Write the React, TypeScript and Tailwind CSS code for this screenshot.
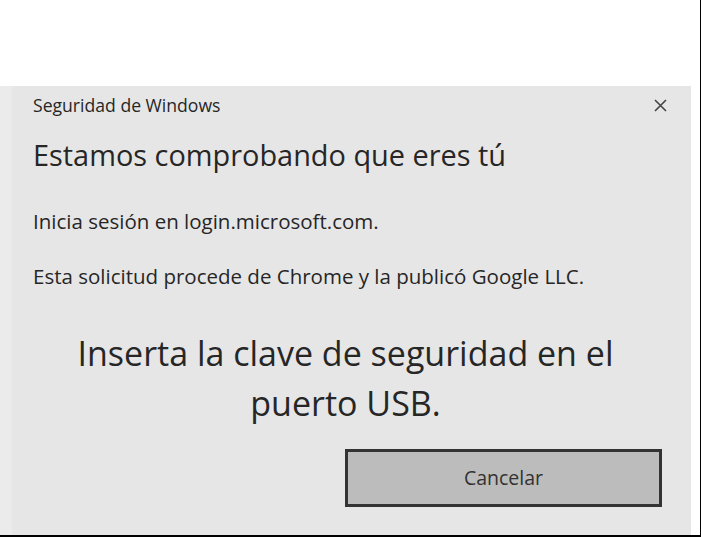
export default function App() {
  return (
    <div className="w-[701px] h-[537px] bg-white border-r border-b-2 border-black flex flex-col font-['Open_Sans','Noto_Sans',sans-serif] text-[#262626]">
      <div className="h-[86px] shrink-0" />
      <div className="w-[691px] flex-1 flex flex-col bg-[linear-gradient(to_right,#ebebeb_12px,#e6e6e6_12px)]">
        <div className="h-[38px] flex items-center justify-between pl-[33px] pr-[19px]">
          <span className="text-[17.6px] leading-[24px]">Seguridad de Windows</span>
          <span className="w-[24px] h-[24px] flex items-center justify-center text-[#444]">
            <svg width="13" height="13" viewBox="0 0 13 13" fill="none" stroke="currentColor" strokeWidth="1.6">
              <path d="M1 1L12 12M12 1L1 12" />
            </svg>
          </span>
        </div>
        <h1 className="mt-[13px] pl-[33px] text-[28.9px] leading-[36px] font-normal">Estamos comprobando que eres tú</h1>
        <p className="mt-[36px] pl-[33px] text-[20.5px] leading-[24px]">Inicia sesión en login.microsoft.com.</p>
        <p className="mt-[31px] pl-[33px] text-[20.5px] leading-[24px]">Esta solicitud procede de Chrome y la publicó Google LLC.</p>
        <p className="mt-[40px] px-[60px] text-center text-[34px] leading-[50px]">
          Inserta la clave de seguridad en el puerto USB.
        </p>
        <div className="mt-[21px] flex justify-end pr-[29px]">
          <button className="w-[317px] h-[58px] border-[3px] border-[#333] bg-[#bcbcbc] text-[19.5px] text-[#333]">
            Cancelar
          </button>
        </div>
      </div>
    </div>
  );
}
